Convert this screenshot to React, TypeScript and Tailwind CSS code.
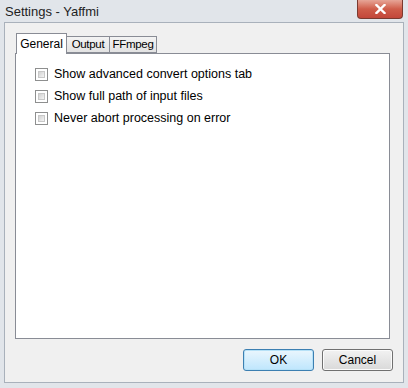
import React from 'react';

const options = [
    'Show advanced convert options tab',
    'Show full path of input files',
    'Never abort processing on error',
];

const tabs = ['General', 'Output', 'FFmpeg'];

export default function App() {
    return (
        <div
            className="w-[408px] h-[388px] bg-[#e1e5ea] flex flex-col overflow-hidden text-[12px] text-black"
            style={{ fontFamily: '"Liberation Sans", Arial, sans-serif' }}
        >
            {/* Title bar */}
            <div className="h-[22px] flex items-start justify-between">
                <span className="pl-[5px] pt-[4px] text-[13px] text-[#1e1e1e] leading-[15px]">Settings - Yaffmi</span>
                <div className="mr-[5px] w-[46px] h-[19px] rounded-b-[4px] border border-t-0 border-[#7a3a30] bg-gradient-to-b from-[#e6a597] via-[#cf5d4a] to-[#c2473a] flex items-center justify-center">
                    <svg width="11" height="10" viewBox="0 0 11 10">
                        <path d="M1.5 1 L9.5 9 M9.5 1 L1.5 9" stroke="#fff" strokeWidth="2.4" strokeLinecap="square" />
                    </svg>
                </div>
            </div>

            {/* Client area */}
            <div className="flex-1 ml-[4px] mr-[4px] mb-[5px] border border-[#a9b1bb] bg-[#f0f0f0] flex flex-col pt-[10px] pl-[10px] pr-[13px]">
                {/* Tabs */}
                <div className="flex items-end h-[20px] relative z-10 pl-[1px]">
                    {tabs.map((tab, i) =>
                        i === 0 ? (
                            <div key={tab} className="h-[21px] -mb-[1px] w-[51px] border border-b-0 border-[#898c95] bg-white flex items-center justify-center leading-none">
                                {tab}
                            </div>
                        ) : (
                            <div key={tab} className={`h-[17px] ${i === 1 ? 'w-[43px]' : 'w-[47px]'} border border-l-0 border-[#898c95] bg-gradient-to-b from-[#f3f3f3] to-[#e3e3e3] flex items-center justify-center leading-none text-[11.5px] tracking-[-0.3px]`}>
                                {tab}
                            </div>
                        )
                    )}
                </div>

                {/* Tab page */}
                <div className="h-[286px] border border-[#898c95] bg-white pt-[14px] pl-[19px] flex flex-col gap-[9px]">
                    {options.map(opt => (
                        <label key={opt} className="flex items-center gap-[6px] h-[13px]">
                            <span className="w-[13px] h-[13px] border border-[#8e8f8f] bg-white p-[2px] flex">
                                <span className="flex-1 bg-gradient-to-br from-[#d2d2d2] to-[#f4f4f4] border border-[#c8c8c8]" />
                            </span>
                            <span className="leading-none text-[12.5px]">{opt}</span>
                        </label>
                    ))}
                </div>

                {/* Buttons */}
                <div className="flex justify-end gap-[8px] mt-[10px] -mr-[3px]">
                    <button className="w-[71px] h-[22px] rounded-[3px] border border-[#3c7fb1] bg-gradient-to-b from-[#eaf6fd] to-[#bee6fd] shadow-[inset_0_0_0_1px_#b6e1f7] leading-none">
                        OK
                    </button>
                    <button className="w-[71px] h-[22px] rounded-[3px] border border-[#707070] bg-gradient-to-b from-[#f2f2f2] to-[#d9d9d9] shadow-[inset_0_0_0_1px_#fbfbfb] leading-none">
                        Cancel
                    </button>
                </div>
            </div>
        </div>
    );
}
